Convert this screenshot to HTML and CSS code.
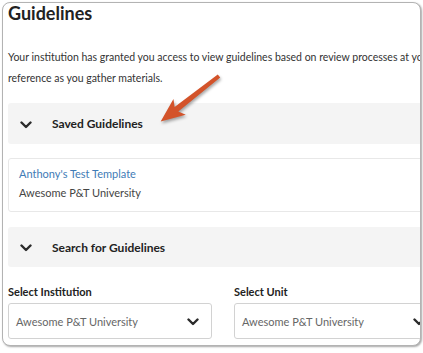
FILE: index.html
```html
<!DOCTYPE html>
<html lang="en">
<head>
    <meta charset="UTF-8">
    <meta name="viewport" content="width=device-width, initial-scale=1.0">
    <title>Guidelines</title>
    <link rel="stylesheet" href="styles.css">
</head>
<body>
    <div class="frame">
        <div class="page">
            <h1 class="title">Guidelines</h1>
            <p class="intro">
                Your institution has granted you access to view guidelines based on review processes at your institution. Use them as a<br>
                reference as you gather materials.
            </p>

            <div class="section-bar">
                <svg class="chevron" width="12" height="8" viewBox="0 0 12 8"><polyline points="1.5,1.5 6,6 10.5,1.5" /></svg>
                <span>Saved Guidelines</span>
            </div>

            <div class="saved-card">
                <a class="saved-link" href="#">Anthony's Test Template</a>
                <div class="saved-inst">Awesome P&amp;T University</div>
            </div>

            <div class="section-bar search-bar">
                <svg class="chevron" width="12" height="8" viewBox="0 0 12 8"><polyline points="1.5,1.5 6,6 10.5,1.5" /></svg>
                <span>Search for Guidelines</span>
            </div>

            <div class="filters">
                <div class="field">
                    <label class="field-label">Select Institution</label>
                    <div class="select">
                        <span>Awesome P&amp;T University</span>
                        <svg class="chevron" width="12" height="8" viewBox="0 0 12 8"><polyline points="1.5,1.5 6,6 10.5,1.5" /></svg>
                    </div>
                </div>
                <div class="field">
                    <label class="field-label">Select Unit</label>
                    <div class="select">
                        <span>Awesome P&amp;T University</span>
                        <svg class="chevron" width="12" height="8" viewBox="0 0 12 8"><polyline points="1.5,1.5 6,6 10.5,1.5" /></svg>
                    </div>
                </div>
            </div>
        </div>
    </div>

    <!-- annotation arrow -->
    <svg class="arrow" width="423" height="353" viewBox="0 0 423 353">
        <g transform="translate(219,76) rotate(142)">
            <polygon points="0,-2 54,-3 50,-10 74,0 50,10 54,3 0,2" />
        </g>
    </svg>
</body>
</html>
```

FILE: styles.css
```css
body {
    margin: 0;
    padding: 0;
    background: #fff;
    font-family: 'Lato', 'Liberation Sans', sans-serif;
    color: #333;
    position: relative;
    width: 423px;
    height: 353px;
    overflow: hidden;
}

/* screenshot frame */
.frame {
    margin: 2px 0 0 2px;
    width: 417px;
    height: 342px;
    border: 1px solid #b3b3b3;
    border-radius: 8px;
    box-shadow: 1px 1px 2px rgba(0,0,0,0.35);
    overflow: hidden;
    background: #fff;
}

.page {
    width: 560px;
    padding: 0 0 0 5px;
}

.title {
    margin: 0;
    font-size: 18px;
    line-height: 20px;
    font-weight: 700;
    color: #222;
}

.intro {
    margin: 24px 0 0 0;
    font-size: 10.5px;
    line-height: 21px;
    color: #333;
    white-space: nowrap;
}

/* collapsible section headers */
.section-bar {
    margin-top: 14px;
    height: 41px;
    background: #f4f4f4;
    border-radius: 3px;
    display: flex;
    align-items: center;
    font-size: 12px;
    font-weight: 700;
    color: #222;
}

.section-bar .chevron {
    margin: 2px 20px 0 12px;
}

.chevron polyline {
    fill: none;
    stroke: #2b2b2b;
    stroke-width: 2.4;
    stroke-linecap: round;
    stroke-linejoin: round;
}

.search-bar {
    margin-top: 15px;
    height: 40px;
}

.saved-card {
    margin-top: 14px;
    height: 40px;
    padding: 5px 10px 7px;
    border: 1px solid #e8e8e8;
    border-radius: 3px;
    font-size: 11px;
    line-height: 19px;
}

.saved-link {
    color: #3f7bb6;
    text-decoration: none;
}

.saved-inst {
    color: #444;
}

/* filters */
.filters {
    display: flex;
    gap: 22px;
    margin-top: 18px;
}

.field {
    width: 204px;
    display: flex;
    flex-direction: column;
}

.field-label {
    font-size: 11px;
    line-height: 14px;
    font-weight: 700;
    color: #222;
}

.select {
    margin-top: 4px;
    height: 34px;
    border: 1px solid #d2d2d2;
    border-radius: 3px;
    display: flex;
    align-items: center;
    justify-content: space-between;
    padding: 0 12px 0 7px;
    font-size: 11px;
    color: #666;
}

.select .chevron {
    margin-top: 1px;
}

.arrow {
    position: absolute;
    left: 0;
    top: 0;
    pointer-events: none;
    filter: drop-shadow(1px 2px 1.5px rgba(0,0,0,0.35));
}

.arrow polygon {
    fill: #d3532a;
}
```
